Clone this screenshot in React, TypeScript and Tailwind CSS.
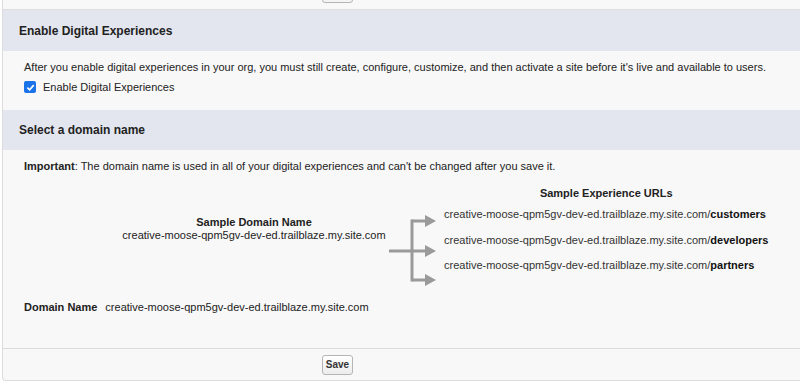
const BASE = 'creative-moose-qpm5gv-dev-ed.trailblaze.my.site.com'

const samplePaths = ['customers', 'developers', 'partners']

function SectionHeader({ title, tall }: { title: string; tall?: boolean }) {
  return (
    <div
      className={`flex items-center bg-[#e3e6ef] pl-[16px] text-[12px] font-bold text-[#222] ${
        tall ? 'h-[41px]' : 'h-[40px]'
      }`}
    >
      {title}
    </div>
  )
}

function BranchArrows() {
  return (
    <svg width="54" height="104" viewBox="0 0 54 104" className="shrink-0">
      <g stroke="#9a9a9a" strokeWidth="3" fill="none">
        <line x1="3" y1="65" x2="26" y2="65" />
        <line x1="26" y1="33.5" x2="26" y2="95.5" />
        <line x1="26" y1="35" x2="41" y2="35" />
        <line x1="26" y1="65" x2="41" y2="65" />
        <line x1="26" y1="94" x2="41" y2="94" />
      </g>
      <g fill="#9a9a9a">
        <polygon points="39,29 50,35 39,41" />
        <polygon points="39,59 50,65 39,71" />
        <polygon points="39,88 50,94 39,100" />
      </g>
    </svg>
  )
}

export default function App() {
  return (
    <div className="h-[381px] w-[800px] overflow-hidden bg-white font-['Liberation_Sans',Arial,sans-serif] text-[11px] leading-[14px] text-[#222]">
      <div className="ml-[2px] flex h-[381px] flex-col rounded-bl-[4px] border-b border-l border-[#dcdcdc] bg-[#f8f8f8]">
        {/* tail of the previous section's button */}
        <div className="h-[10px] shrink-0 overflow-hidden border-b border-[#dedede]">
          <div className="-mt-[14px] ml-[319px] h-[17px] w-[31px] rounded-[3px] border border-[#b5b5b5] bg-[#f4f4f4]" />
        </div>

        <SectionHeader title="Enable Digital Experiences" tall />
        <div className="h-[59px] shrink-0 pl-[21px] pt-[9px]">
          <div>
            After you enable digital experiences in your org, you must still create, configure, customize, and then
            activate a site before it's live and available to users.
          </div>
          <label className="mt-[6px] flex items-center gap-[7px]">
            <span className="flex h-[12px] w-[12px] items-center justify-center rounded-[2px] bg-[#1a73e8]">
              <svg width="9" height="9" viewBox="0 0 10 10">
                <path d="M1.5 5.2 4 7.6 8.6 2.4" stroke="white" strokeWidth="1.8" fill="none" />
              </svg>
            </span>
            Enable Digital Experiences
          </label>
        </div>

        <SectionHeader title="Select a domain name" />
        <div className="h-[199px] shrink-0 border-b border-[#dcdcdc] pl-[21px] pt-[9px]">
          <div>
            <span className="font-bold">Important</span>: The domain name is used in all of your digital experiences
            and can't be changed after you save it.
          </div>

          <div className="mt-[13px] flex h-[104px]">
            <div className="ml-[98px] mt-[29px] w-[264px] text-center">
              <div className="font-bold">Sample Domain Name</div>
              <div className="-mt-[1px]">{BASE}</div>
            </div>
            <BranchArrows />
            <div className="ml-[4px] flex flex-col">
              <div className="text-center font-bold">Sample Experience URLs</div>
              <div className="mt-[7px] flex flex-col gap-[11.5px] text-[#333]">
                {samplePaths.map(p => (
                  <div key={p}>
                    {BASE}/<span className="font-bold text-[#111]">{p}</span>
                  </div>
                ))}
              </div>
            </div>
          </div>

          <div className="mt-[10px] flex gap-[8px]">
            <span className="font-bold">Domain Name</span>
            <span>{BASE}</span>
          </div>
        </div>

        <div className="flex h-[31px] shrink-0 items-start pt-[6px]">
          <button className="ml-[319px] h-[20px] w-[31px] rounded-[3px] border border-[#b5b5b5] bg-gradient-to-b from-white to-[#ececec] text-[10px] font-bold text-[#333]">
            Save
          </button>
        </div>
      </div>
    </div>
  )
}
